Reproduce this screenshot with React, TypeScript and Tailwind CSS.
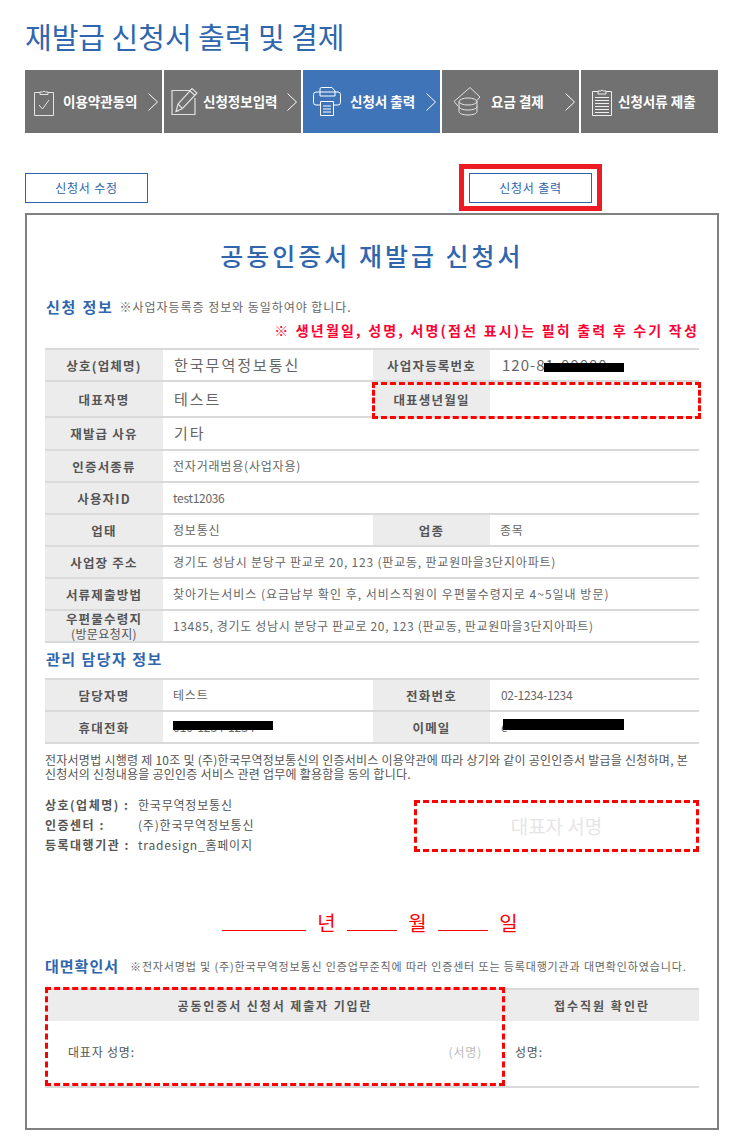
const steps = [
  { label: "이용약관동의", icon: "agree", active: false, arrow: true, pad: "pl-[9px]", gap: "ml-[9px]", text: "w-[84px]" },
  { label: "신청정보입력", icon: "write", active: false, arrow: true, pad: "pl-[7px]", gap: "ml-[4px]", text: "w-[83px]" },
  { label: "신청서 출력", icon: "print", active: true, arrow: true, pad: "pl-[10px]", gap: "ml-[9px]", text: "w-[75px]" },
  { label: "요금 결제", icon: "pay", active: false, arrow: true, pad: "pl-[11px]", gap: "ml-[10px]", text: "w-[73px]" },
  { label: "신청서류 제출", icon: "submit", active: false, arrow: false, pad: "pl-[11px]", gap: "ml-[6px]", text: "w-[80px]" },
];

function StepIcon({ name }: { name: string }) {
  if (name === "agree") {
    return (
      <svg width="20" height="28" viewBox="0 0 20 28" fill="none" stroke="#e4e4e4" strokeWidth="1">
        <path d="M6 4.500H.5v23h19v-23H14" />
        <path d="M6 6.500V4h2.500a2 2 0 0 1 3 0H14v2.500z" />
        <path d="m5 17 3.500 4L15 12" />
      </svg>
    );
  }
  if (name === "write") {
    return (
      <svg width="28" height="29" viewBox="0 0 28 29" fill="none" stroke="#e0e0e0" strokeWidth="1.200">
        <path d="M19 3.500H1v24h23V11" />
        <path d="M5 24.500 7 17 21 1.500l5 4.500-14.500 15.500z" />
        <path d="m7 17 4.500 4.500M19 4l5 4.500M5 24.500l3-1" />
      </svg>
    );
  }
  if (name === "print") {
    return (
      <svg width="28" height="29" viewBox="0 0 28 29" fill="none" stroke="#ffffff" strokeWidth="1">
        <path d="M7 18H3a2.500 2.500 0 0 1-2.500-2.500v-8A2.500 2.500 0 0 1 3 5h22a2.500 2.500 0 0 1 2.500 2.500v8A2.500 2.500 0 0 1 25 18h-4" />
        <path d="M7 9V2a1.500 1.500 0 0 1 1.500-1.500H19L22 4v5z" />
        <path d="M7.500 14.500h13v14h-13z" />
        <path d="M10 19h8M10 22h8M10 25h8" />
      </svg>
    );
  }
  if (name === "pay") {
    return (
      <svg width="28" height="29" viewBox="0 0 28 29" fill="none" stroke="#e4e4e4" strokeWidth="1">
        <path d="M5 19 1 14.500 17 .5l10 9.500-4 4.500" />
        <ellipse cx="15" cy="14.500" rx="9" ry="3.500" />
        <path d="M6 14.500v10c0 2 4 3.500 9 3.500s9-1.500 9-3.500v-10" />
        <path d="M6 19.500c0 2 4 3.500 9 3.500s9-1.500 9-3.500" />
      </svg>
    );
  }
  return (
    <svg width="20" height="28" viewBox="0 0 20 28" fill="none" stroke="#eeeeee" strokeWidth="1">
      <path d="M6 3.500H.5v24h19v-24H14" />
      <path d="M6 6V3h2.500a2 2 0 0 1 3 0H14v3z" />
      <path d="M3 9.500h14M3 12.500h14M3 15.500h14M3 18.500h14M3 21.500h14M3 24.500h14" />
    </svg>
  );
}

function Chevron() {
  return (
    <svg width="10" height="18" viewBox="0 0 10 18" fill="none" stroke="#ffffff" strokeWidth="1" className="ml-[1px] shrink-0">
      <path d="m.5.500 9 8.500-9 8.500" />
    </svg>
  );
}

function Label({ children, width }: { children: React.ReactNode; width: string }) {
  return (
    <div className={`${width} shrink-0 bg-[#ececec] flex flex-col items-center justify-center text-[12.500px] leading-[15px] font-bold text-[#555555] tracking-[1.200px]`}>
      {children}
    </div>
  );
}

function Row({ className, children }: { className: string; children: React.ReactNode }) {
  return <div className={`flex border-b-2 border-[#d9d9d9] ${className}`}>{children}</div>;
}

const lgLabel = "w-[118px]";
const smLabel = "w-[117px]";
const bigValue = "pl-[11px] flex items-center text-[15px] tracking-[2px]";
const smallValue = "pl-[10px] flex items-center text-[12px] tracking-[0.800px] whitespace-nowrap";

export default function App() {
  return (
    <div className="w-[739px] h-[1143px] overflow-hidden bg-white pl-[25px] font-['Noto_Sans_CJK_KR',sans-serif]">
      <h1 className="h-[70px] pt-[14px] text-[29px] leading-[44px] text-[#2f66ae]">재발급 신청서 출력 및 결제</h1>

      <div className="flex gap-[2px] w-[693px]">
        {steps.map((step) => (
          <div
            key={step.label}
            className={`w-[137px] h-[63px] flex items-center ${step.pad} ${step.active ? "bg-[#3f75b8]" : "bg-[#717171]"}`}
          >
            <div className="shrink-0"><StepIcon name={step.icon} /></div>
            <span className={`${step.gap} ${step.text} shrink-0 text-[13.500px] font-bold text-white whitespace-nowrap`}>{step.label}</span>
            {step.arrow ? <Chevron /> : null}
          </div>
        ))}
      </div>

      <div className="relative h-[40px] mt-[40px] flex justify-between w-[567px]">
        <button type="button" className="w-[123px] h-[30px] border border-[#2d65ad] text-[12px] tracking-[0.800px] text-[#2d65ad]">신청서 수정</button>
        <button type="button" className="w-[123px] h-[30px] border border-[#2d65ad] text-[12px] tracking-[0.800px] text-[#2d65ad]">신청서 출력</button>
        <div className="absolute left-[434px] top-[-9px] w-[143px] h-[47px] border-[5px] border-[#ed1c24]" />
      </div>

      <div className="w-[694px] h-[917px] border-2 border-[#808080] px-[18px] text-[#666666]">
        <h2 className="h-[82px] pt-[22px] text-center text-[25px] leading-[36px] tracking-[3px] font-medium text-[#2f66ae]">공동인증서 재발급 신청서</h2>

        <div className="flex items-center h-[20px] pl-[1px]">
          <span className="text-[15px] font-bold tracking-[1.800px] text-[#2f66ae]">신청 정보</span>
          <span className="ml-[6px] text-[12px] tracking-[0.950px] text-[#666666]">※사업자등록증 정보와 동일하여야 합니다.</span>
        </div>
        <p className="mt-[3px] h-[20px] text-right text-[14px] leading-[20px] font-bold tracking-[2.200px] whitespace-nowrap text-[#ff0033]">※ 생년월일, 성명, 서명(점선 표시)는 필히 출력 후 수기 작성</p>

        <div className="relative mt-[8px] border-t-2 border-[#d9d9d9] w-[654px]">
          <Row className="h-[32px]">
            <Label width={lgLabel}>상호(업체명)</Label>
            <div className={`w-[210px] ${bigValue}`}>한국무역정보통신</div>
            <Label width={smLabel}>사업자등록번호</Label>
            <div className="flex-1 pl-[12px] flex items-center text-[15px] tracking-[1px]">120-81-00000</div>
          </Row>
          <Row className="h-[36px]">
            <Label width={lgLabel}>대표자명</Label>
            <div className={`w-[210px] ${bigValue}`}>테스트</div>
            <Label width={smLabel}>대표생년월일</Label>
            <div className="flex-1" />
          </Row>
          <Row className="h-[33px]">
            <Label width={lgLabel}>재발급 사유</Label>
            <div className={`flex-1 ${bigValue}`}>기타</div>
          </Row>
          <Row className="h-[32px]">
            <Label width={lgLabel}>인증서종류</Label>
            <div className={`flex-1 ${smallValue}`}>전자거래범용(사업자용)</div>
          </Row>
          <Row className="h-[32px]">
            <Label width={lgLabel}>사용자ID</Label>
            <div className="flex-1 pl-[10px] flex items-center text-[12px] tracking-[-0.300px]">test12036</div>
          </Row>
          <Row className="h-[32px]">
            <Label width={lgLabel}>업태</Label>
            <div className={`w-[210px] ${smallValue}`}>정보통신</div>
            <Label width={smLabel}>업종</Label>
            <div className={`flex-1 ${smallValue}`}>종목</div>
          </Row>
          <Row className="h-[32px]">
            <Label width={lgLabel}>사업장 주소</Label>
            <div className={`flex-1 ${smallValue}`}>경기도 성남시 분당구 판교로 20, 123 (판교동, 판교원마을3단지아파트)</div>
          </Row>
          <Row className="h-[32px]">
            <Label width={lgLabel}>서류제출방법</Label>
            <div className="flex-1 pl-[10px] flex items-center text-[12px] tracking-[1px] whitespace-nowrap">찾아가는서비스 (요금납부 확인 후, 서비스직원이 우편물수령지로 4~5일내 방문)</div>
          </Row>
          <Row className="h-[32px]">
            <Label width={lgLabel}>우편물수령지<span className="font-normal text-[12px] tracking-[0.400px]">(방문요청지)</span></Label>
            <div className="flex-1 pl-[10px] flex items-center text-[12px] tracking-[0.650px] whitespace-nowrap">13485, 경기도 성남시 분당구 판교로 20, 123 (판교동, 판교원마을3단지아파트)</div>
          </Row>
          <div className="absolute left-[499px] top-[13px] w-[80px] h-[9px] bg-black" />
          <div className="absolute left-[327px] top-[32px] w-[329px] h-[37px] border-[3px] border-dashed border-[#ff0000]" />
        </div>

        <h3 className="h-[35px] pt-[5px] pl-[1px] text-[15px] leading-[22px] font-bold tracking-[1.500px] text-[#2f66ae]">관리 담당자 정보</h3>

        <div className="relative border-t-2 border-[#d9d9d9] w-[654px]">
          <Row className="h-[32px]">
            <Label width={lgLabel}>담당자명</Label>
            <div className={`w-[210px] ${smallValue}`}>테스트</div>
            <Label width={smLabel}>전화번호</Label>
            <div className="flex-1 pl-[11px] flex items-center text-[12px] tracking-[-0.300px]">02-1234-1234</div>
          </Row>
          <Row className="h-[32px]">
            <Label width={lgLabel}>휴대전화</Label>
            <div className="w-[210px] pl-[10px] flex items-center text-[12px]">010-1234-1234</div>
            <Label width={smLabel}>이메일</Label>
            <div className="flex-1 pl-[11px] flex items-center text-[12px]">e</div>
          </Row>
          <div className="absolute left-[128px] top-[41px] w-[100px] h-[9px] bg-black" />
          <div className="absolute left-[458px] top-[39px] w-[121px] h-[11px] bg-black" />
        </div>

        <p className="mt-[9px] text-[12px] leading-[14px] tracking-[0.250px] text-[#555555]">
          전자서명법 시행령 제 10조 및 (주)한국무역정보통신의 인증서비스 이용약관에 따라 상기와 같이 공인인증서 발급을 신청하며, 본 신청서의 신청내용을 공인인증 서비스 관련 업무에 활용함을 동의 합니다.
        </p>

        <div className="flex justify-between mt-[12px] h-[56px]">
          <div className="pt-[2px] text-[12px] leading-[20px] tracking-[0.800px] text-[#555555]">
            <div className="flex"><b className="w-[93px] tracking-[1.500px] whitespace-nowrap">상호(업체명) :</b><span>한국무역정보통신</span></div>
            <div className="flex"><b className="w-[93px] tracking-[1.500px] whitespace-nowrap">인증센터 :</b><span>(주)한국무역정보통신</span></div>
            <div className="flex"><b className="w-[93px] tracking-[1.500px] whitespace-nowrap">등록대행기관 :</b><span>tradesign_홈페이지</span></div>
          </div>
          <div className="w-[285px] h-[52px] border-[3px] border-dashed border-[#ff0000] flex items-center justify-center text-[19px] text-[#e5e5e5] mt-[7px]">대표자 서명</div>
        </div>

        <div className="flex items-end justify-center h-[38px] mt-[50px] text-[#ff0000] text-[20px] leading-[28px] pl-[7px]">
          <span className="w-[84px] h-px bg-[#ff0000] mb-[6px]" />
          <span className="w-[41px] text-center">년</span>
          <span className="w-[50px] h-px bg-[#ff0000] mb-[6px]" />
          <span className="w-[41px] text-center">월</span>
          <span className="w-[50px] h-px bg-[#ff0000] mb-[6px]" />
          <span className="w-[41px] text-center">일</span>
        </div>

        <div className="flex items-center h-[20px] mt-[19px]">
          <span className="text-[15px] font-bold tracking-[1px] text-[#2f66ae]">대면확인서</span>
          <span className="ml-[11px] text-[11px] tracking-[0.860px] whitespace-nowrap text-[#666666]">※전자서명법 및 (주)한국무역정보통신 인증업무준칙에 따라 인증센터 또는 등록대행기관과 대면확인하였습니다.</span>
        </div>

        <div className="relative mt-[12px] w-[654px] h-[100px] flex border-t-2 border-b-2 border-[#d9d9d9] text-[12px] tracking-[0.800px] text-[#555555]">
          <div className="w-[460px] flex flex-col">
            <div className="h-[31px] bg-[#ececec] flex items-center justify-center font-bold tracking-[1.900px]">공동인증서 신청서 제출자 기입란</div>
            <div className="flex-1 flex items-center justify-between pl-[23px] pr-[23px] pb-[4px]">
              <span>대표자 성명:</span>
              <span className="text-[#bbbbbb]">(서명)</span>
            </div>
          </div>
          <div className="flex-1 flex flex-col">
            <div className="h-[31px] bg-[#ececec] flex items-center justify-center font-bold tracking-[2px]">접수직원 확인란</div>
            <div className="flex-1 flex items-center pl-[10px] pb-[4px]">성명:</div>
          </div>
          <div className="absolute left-0 top-[-3px] w-[460px] h-[99px] border-[3px] border-dashed border-[#ff0000]" />
        </div>
      </div>
    </div>
  );
}
